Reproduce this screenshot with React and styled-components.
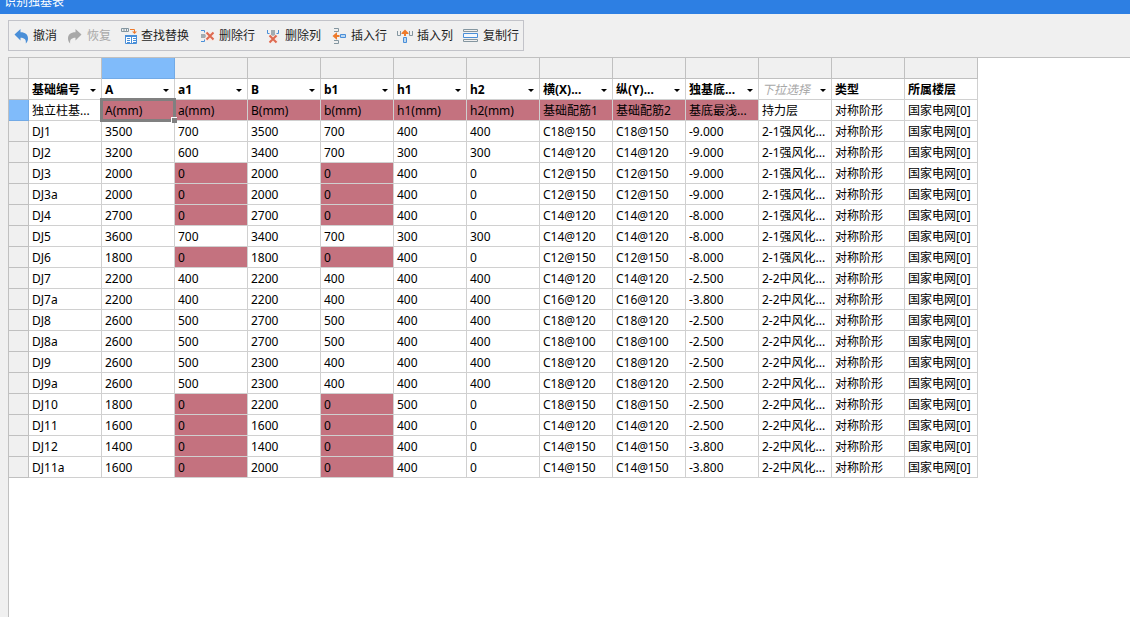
import styled, { createGlobalStyle } from "styled-components";

const columns = [
  { title: "基础编号", menu: true },
  { title: "A", menu: true },
  { title: "a1", menu: true },
  { title: "B", menu: true },
  { title: "b1", menu: true },
  { title: "h1", menu: true },
  { title: "h2", menu: true },
  { title: "横(X)...", menu: true },
  { title: "纵(Y)...", menu: true },
  { title: "独基底...", menu: true },
  { title: "下拉选择", menu: true, placeholder: true },
  { title: "类型" },
  { title: "所属楼层" },
];

const units = [
  "独立柱基...",
  "A(mm)",
  "a(mm)",
  "B(mm)",
  "b(mm)",
  "h1(mm)",
  "h2(mm)",
  "基础配筋1",
  "基础配筋2",
  "基底最浅...",
  "持力层",
  "对称阶形",
  "国家电网[0]",
];

const strong = "2-1强风化...";
const medium = "2-2中风化...";

const footings = [
  ["DJ1", 3500, 700, 3500, 700, 400, 400, "C18@150", "-9.000", strong],
  ["DJ2", 3200, 600, 3400, 700, 300, 300, "C14@120", "-9.000", strong],
  ["DJ3", 2000, 0, 2000, 0, 400, 0, "C12@150", "-9.000", strong],
  ["DJ3a", 2000, 0, 2000, 0, 400, 0, "C12@150", "-9.000", strong],
  ["DJ4", 2700, 0, 2700, 0, 400, 0, "C14@120", "-8.000", strong],
  ["DJ5", 3600, 700, 3400, 700, 300, 300, "C14@120", "-8.000", strong],
  ["DJ6", 1800, 0, 1800, 0, 400, 0, "C12@150", "-8.000", strong],
  ["DJ7", 2200, 400, 2200, 400, 400, 400, "C14@120", "-2.500", medium],
  ["DJ7a", 2200, 400, 2200, 400, 400, 400, "C16@120", "-3.800", medium],
  ["DJ8", 2600, 500, 2700, 500, 400, 400, "C18@120", "-2.500", medium],
  ["DJ8a", 2600, 500, 2700, 500, 400, 400, "C18@100", "-2.500", medium],
  ["DJ9", 2600, 500, 2300, 400, 400, 400, "C18@120", "-2.500", medium],
  ["DJ9a", 2600, 500, 2300, 400, 400, 400, "C18@120", "-2.500", medium],
  ["DJ10", 1800, 0, 2200, 0, 500, 0, "C18@150", "-2.500", medium],
  ["DJ11", 1600, 0, 1600, 0, 400, 0, "C14@120", "-2.500", medium],
  ["DJ12", 1400, 0, 1400, 0, 400, 0, "C14@150", "-3.800", medium],
  ["DJ11a", 1600, 0, 2000, 0, 400, 0, "C14@150", "-3.800", medium],
];

// both directions share one rebar spec, type and floor are the same everywhere
const toCells = ([name, A, a1, B, b1, h1, h2, rebar, level, layer]) => [
  name, A, a1, B, b1, h1, h2, rebar, rebar, level, layer, "对称阶形", "国家电网[0]",
];

const isInvalid = (value, col) => (col === 2 || col === 4) && value === 0;

const BLUE = "#4a8fd8";
const GRAY = "#8496a0";
const ORANGE = "#ee7a2b";
const RED = "#dd6a50";

const icons = {
  undo: (
    <path d="M1.500 6.500 7.500 1v3.300c5 0 7.500 2.500 7.500 6.200 0 2-.8 3.800-2.200 5 .5-3.500-1-5.700-5.300-5.700V12.500z" fill={BLUE} />
  ),
  redo: (
    <path d="M14.500 6.500 8.500 1v3.300c-5 0-7.500 2.500-7.500 6.200 0 2 .8 3.800 2.200 5-.5-3.500 1-5.700 5.300-5.700V12.500z" fill="#a8a8a8" />
  ),
  replace: (
    <>
      <path d="M.5.5h7v3h-7zM3 .5v3M5.500.5v3" fill="none" stroke={GRAY} />
      <path d="M9 1.500h4.500V4" fill="none" stroke={ORANGE} />
      <path d="M11 3.500h5L13.500 6z" fill={ORANGE} />
      <path d="M4.500 7.500h11v8h-11z" fill="#fff" stroke={BLUE} />
      <path d="M4 7h12v2H4z" fill={BLUE} />
      <path d="M6 10.500h3M6 12.500h3M6 14.500h3M10.500 9v6M12 10.500h3M12 12.500h3M12 14.500h3" stroke={BLUE} />
    </>
  ),
  deleteRow: (
    <>
      <path d="M6 4h9v9H6z" fill="#f8e9e5" />
      <path d="M2 2.500h3.500v2M2 13.500h3.500v-2" fill="none" stroke={BLUE} />
      <path d="M2 6h4l1 2-1 2H2z" fill="#a3acb1" />
      <path d="m7.500 4.500 7 7m0-7-7 7" stroke={RED} strokeWidth="2" />
    </>
  ),
  deleteColumn: (
    <>
      <path d="M4 7h9v8H4z" fill="#f8e9e5" />
      <path d="M2.500 2v3.500h2M13.500 2v3.500h-2" fill="none" stroke={BLUE} />
      <path d="M6 2h4v5L8 8 6 7z" fill="#a3acb1" />
      <path d="m4.500 7.500 7 7m0-7-7 7" stroke={RED} strokeWidth="2" />
    </>
  ),
  insertRow: (
    <>
      <path d="M3 .5h4.500v3H3M3 15.500h4.500v-3H3" fill="none" stroke={GRAY} />
      <path d="M1.500 8 5.500 4.500H6V7h2.500v2H6v2.500h-.5z" fill={ORANGE} />
      <path d="M9.500 6.500h5v3h-5z" fill="#bcd8f2" stroke={BLUE} />
    </>
  ),
  insertColumn: (
    <>
      <path d="M.5 3v4.500h3V3M12.500 3v4.500h3V3" fill="none" stroke={GRAY} />
      <path d="M8 1.500 11.500 5v1H9v2H7V6H4.500V5z" fill={ORANGE} />
      <path d="M6.500 9.500h3v5h-3z" fill="#bcd8f2" stroke={BLUE} />
    </>
  ),
  copyRow: (
    <>
      <path d="M.5 1.500h14v2H.5zM.5 11.500h14v2H.5z" fill="none" stroke={GRAY} />
      <path d="M.5 5.500h14v4H.5z" fill="#f4f8fc" stroke={BLUE} />
    </>
  ),
};

const tools = [
  { icon: "undo", label: "撤消" },
  { icon: "redo", label: "恢复", disabled: true },
  { icon: "replace", label: "查找替换" },
  { icon: "deleteRow", label: "删除行" },
  { icon: "deleteColumn", label: "删除列" },
  { icon: "insertRow", label: "插入行" },
  { icon: "insertColumn", label: "插入列" },
  { icon: "copyRow", label: "复制行" },
];

export default function App() {
  return (
    <>
      <GlobalStyle />
      <Page>
        <TitleBar>
          <Title>识别独基表</Title>
        </TitleBar>
        <Content>
          <Toolbar role="toolbar">
            {tools.map(({ icon, label, disabled }) => (
              <ToolButton key={icon} type="button" disabled={disabled}>
                <svg width="16" height="16" viewBox="0 0 16 16" aria-hidden="true">
                  {icons[icon]}
                </svg>
                {label}
              </ToolButton>
            ))}
          </Toolbar>
          <Sheet>
            <Table>
              <colgroup>
                <IndexCol />
                {columns.map(({ title }) => (
                  <DataCol key={title} />
                ))}
              </colgroup>
              <thead>
                <tr>
                  <Strip />
                  {columns.map(({ title }, col) => (
                    <Strip key={title} $active={col === 1} />
                  ))}
                </tr>
                <tr>
                  <Strip />
                  {columns.map(({ title, menu, placeholder }) => (
                    <HeadCell key={title} scope="col">
                      {menu ? (
                        <HeadButton type="button" $placeholder={placeholder}>
                          {title}
                          <Caret />
                        </HeadButton>
                      ) : (
                        title
                      )}
                    </HeadCell>
                  ))}
                </tr>
              </thead>
              <tbody>
                <tr>
                  <Strip $active />
                  {units.map((text, col) => (
                    <Cell key={text} $invalid={col > 0 && col < 10} $selected={col === 1}>
                      {text}
                    </Cell>
                  ))}
                </tr>
                {footings.map((footing) => (
                  <tr key={footing[0]}>
                    <Strip />
                    {toCells(footing).map((value, col) => (
                      <Cell key={col} $invalid={isInvalid(value, col)}>
                        {value}
                      </Cell>
                    ))}
                  </tr>
                ))}
              </tbody>
            </Table>
          </Sheet>
        </Content>
      </Page>
    </>
  );
}

const GlobalStyle = createGlobalStyle`
  * {
    box-sizing: border-box;
  }
  body {
    margin: 0;
    background: #f0f0f0;
    color: #000;
    font: 12px/18px "Noto Sans", "Noto Sans CJK SC", sans-serif;
  }
  button {
    font: inherit;
    color: inherit;
    background: none;
    border: 0;
    padding: 0;
  }
`;

const Page = styled.div`
  display: flex;
  flex-direction: column;
  min-height: 100vh;
`;

const TitleBar = styled.header`
  display: flex;
  align-items: flex-end;
  height: 14px;
  padding: 0 4px 3px;
  overflow: hidden;
  background: #2d7fe3;
  color: #fff;
`;

const Title = styled.h1`
  margin: 0;
  font-size: 12px;
  font-weight: 400;
`;

const Content = styled.main`
  display: flex;
  flex: 1;
  flex-direction: column;
  align-items: flex-start;
  gap: 6px;
  padding: 6px 0 0 8px;
`;

const Toolbar = styled.div`
  display: flex;
  gap: 10px;
  height: 31px;
  padding: 1px 4px 0;
  border: 1px solid #c2c3c9;
`;

const ToolButton = styled.button`
  display: flex;
  align-items: center;
  gap: 4px;
  color: #1e1e1e;
  white-space: nowrap;
  &:disabled {
    color: #a8a8a8;
  }
`;

const Sheet = styled.section`
  flex: 1;
  align-self: stretch;
  background: #fff;
  border: 1px solid #c0c0c0;
  border-width: 1px 0 0 1px;
`;

const Table = styled.table`
  width: 969px;
  table-layout: fixed;
  border-collapse: separate;
  border-spacing: 0;
`;

const IndexCol = styled.col`
  width: 20px;
`;

const DataCol = styled.col`
  width: 73px;
`;

const Strip = styled.td`
  height: 21px;
  padding: 0;
  background: ${({ $active }) => ($active ? "#80bbfa" : "#f0f0f0")};
  border: 1px solid ${({ $active }) => ($active ? "#72aae6" : "#c0c0c0")};
  border-width: 0 1px 1px 0;
`;

const HeadCell = styled.th`
  height: 21px;
  padding: 2px 3px 0;
  border: 1px solid #d0d0d0;
  border-width: 0 1px 1px 0;
  text-align: left;
  white-space: nowrap;
`;

const HeadButton = styled.button`
  display: flex;
  align-items: center;
  justify-content: space-between;
  width: 100%;
  font-weight: ${({ $placeholder }) => ($placeholder ? 400 : 700)};
  font-style: ${({ $placeholder }) => ($placeholder ? "italic" : "normal")};
  color: ${({ $placeholder }) => ($placeholder ? "#a8a8a8" : "#000")};
`;

const Caret = styled.span`
  margin-right: 2px;
  border: solid transparent;
  border-width: 3px 3px 0;
  border-top-color: #000;
`;

const Cell = styled.td`
  position: relative;
  height: 21px;
  padding: 2px 3px 0;
  background: ${({ $invalid }) => ($invalid ? "#c4727f" : "#fff")};
  border: 1px solid #d0d0d0;
  border-width: 0 1px 1px 0;
  white-space: nowrap;
  ${({ $selected }) =>
    $selected &&
    `
    &::before {
      content: "";
      position: absolute;
      inset: -2px;
      border: 3px solid #808080;
      z-index: 1;
    }
    &::after {
      content: "";
      position: absolute;
      right: -3px;
      bottom: -3px;
      width: 5px;
      height: 5px;
      background: #808080;
      border: solid #fff;
      border-width: 1px 0 0 1px;
      z-index: 2;
    }
  `}
`;
